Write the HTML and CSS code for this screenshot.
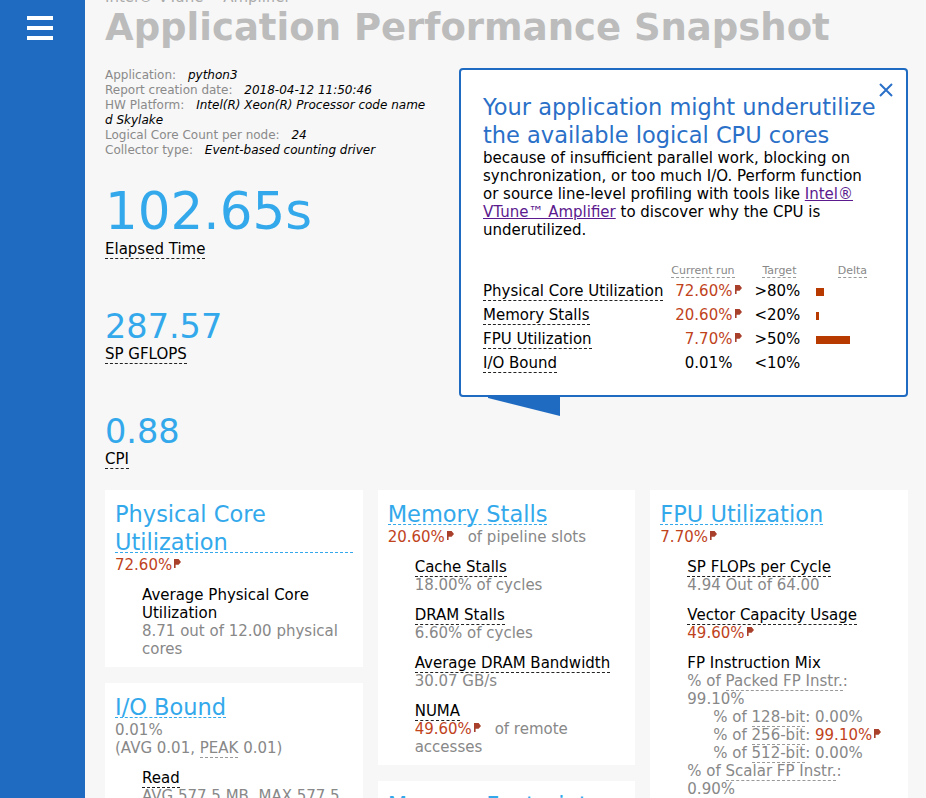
FILE: index.html
```html
<!DOCTYPE html>
<html lang="en">
<head>
<meta charset="utf-8">
<title>Application Performance Snapshot</title>
<link rel="stylesheet" href="styles.css">
</head>
<body>
<div class="app">
  <nav class="sidebar">
    <div class="burger"><span></span><span></span><span></span></div>
  </nav>
  <main class="main">
    <header class="head">
      <div class="product">Intel® VTune™ Amplifier</div>
      <h1 class="title">Application Performance Snapshot</h1>
    </header>

    <section class="meta">
      <div><span class="k">Application:</span> <span class="v">python3</span></div>
      <div><span class="k">Report creation date:</span> <span class="v">2018-04-12 11:50:46</span></div>
      <div><span class="k">HW Platform:</span> <span class="v">Intel(R) Xeon(R) Processor code named Skylake</span></div>
      <div><span class="k">Logical Core Count per node:</span> <span class="v">24</span></div>
      <div><span class="k">Collector type:</span> <span class="v">Event-based counting driver</span></div>
    </section>

    <section class="metrics">
      <div class="metric m1"><div class="num">102.65s</div><div class="lbl"><span class="dash">Elapsed Time</span></div></div>
      <div class="metric m2"><div class="num">287.57</div><div class="lbl"><span class="dash">SP GFLOPS</span></div></div>
      <div class="metric m2"><div class="num">0.88</div><div class="lbl"><span class="dash">CPI</span></div></div>
    </section>

    <section class="cards">
      <div class="col">
        <div class="card">
          <div class="card-title">Physical Core Utilization</div>
          <div class="val"><span class="bad">72.60%<svg class="flag" viewBox="0 0 7 9"><path d="M0 0h1.6v9H0z M1.6 0H4.6l2.4 2.9L4.6 5.8H1.6z"/></svg></span></div>
          <div class="item">
            <div class="item-name">Average Physical Core Utilization</div>
            <div class="gray">8.71 out of 12.00 physical cores</div>
          </div>
        </div>
        <div class="card">
          <div class="card-title">I/O Bound</div>
          <div class="gray">0.01%</div>
          <div class="gray">(AVG 0.01, <span class="dash-g">PEAK</span> 0.01)</div>
          <div class="item">
            <div><span class="dash">Read</span></div>
            <div class="gray">AVG 577.5 MB, MAX 577.5 MB</div>
          </div>
        </div>
      </div>
      <div class="col">
        <div class="card">
          <div class="card-title">Memory Stalls</div>
          <div class="val"><span class="bad">20.60%<svg class="flag" viewBox="0 0 7 9"><path d="M0 0h1.6v9H0z M1.6 0H4.6l2.4 2.9L4.6 5.8H1.6z"/></svg></span> <span class="gray note">of pipeline slots</span></div>
          <div class="item">
            <div><span class="dash">Cache Stalls</span></div>
            <div class="gray">18.00% of cycles</div>
          </div>
          <div class="item">
            <div><span class="dash">DRAM Stalls</span></div>
            <div class="gray">6.60% of cycles</div>
          </div>
          <div class="item">
            <div><span class="dash">Average DRAM Bandwidth</span></div>
            <div class="gray">30.07 GB/s</div>
          </div>
          <div class="item">
            <div><span class="dash">NUMA</span></div>
            <div><span class="bad">49.60%<svg class="flag" viewBox="0 0 7 9"><path d="M0 0h1.6v9H0z M1.6 0H4.6l2.4 2.9L4.6 5.8H1.6z"/></svg></span> <span class="gray note">of remote accesses</span></div>
          </div>
        </div>
        <div class="card">
          <div class="card-title">Memory Footprint</div>
        </div>
      </div>
      <div class="col">
        <div class="card">
          <div class="card-title">FPU Utilization</div>
          <div class="val"><span class="bad">7.70%<svg class="flag" viewBox="0 0 7 9"><path d="M0 0h1.6v9H0z M1.6 0H4.6l2.4 2.9L4.6 5.8H1.6z"/></svg></span></div>
          <div class="item">
            <div><span class="dash">SP FLOPs per Cycle</span></div>
            <div class="gray">4.94 Out of 64.00</div>
          </div>
          <div class="item">
            <div><span class="dash">Vector Capacity Usage</span></div>
            <div><span class="bad">49.60%<svg class="flag" viewBox="0 0 7 9"><path d="M0 0h1.6v9H0z M1.6 0H4.6l2.4 2.9L4.6 5.8H1.6z"/></svg></span></div>
          </div>
          <div class="item">
            <div>FP Instruction Mix</div>
            <div class="gray">% of <span class="dash-g">Packed FP Instr.</span>: 99.10%</div>
            <div class="gray sub">% of <span class="dash-g">128-bit</span>: 0.00%</div>
            <div class="gray sub">% of <span class="dash-g">256-bit</span>: <span class="bad">99.10%<svg class="flag" viewBox="0 0 7 9"><path d="M0 0h1.6v9H0z M1.6 0H4.6l2.4 2.9L4.6 5.8H1.6z"/></svg></span></div>
            <div class="gray sub">% of <span class="dash-g">512-bit</span>: 0.00%</div>
            <div class="gray">% of <span class="dash-g">Scalar FP Instr.</span>: 0.90%</div>
          </div>
        </div>
      </div>
    </section>

    <div class="popup">
      <button class="close" aria-label="Close"><svg viewBox="0 0 14 14"><path d="M1 1L13 13M13 1L1 13"/></svg></button>
      <h2 class="pop-title">Your application might underutilize the available logical CPU cores</h2>
      <p class="pop-text">because of insufficient parallel work, blocking on synchronization, or too much I/O. Perform function or source line-level profiling with tools like <a class="link" href="#">Intel® VTune™ Amplifier</a> to discover why the CPU is underutilized.</p>
      <div class="ptable">
        <div class="th"></div>
        <div class="th"><span class="dash-g">Current run</span></div>
        <div class="th"><span class="dash-g">Target</span></div>
        <div class="th"><span class="dash-g">Delta</span></div>

        <div class="td name"><span class="dash">Physical Core Utilization</span></div>
        <div class="td cur bad">72.60%<svg class="flag" viewBox="0 0 7 9"><path d="M0 0h1.6v9H0z M1.6 0H4.6l2.4 2.9L4.6 5.8H1.6z"/></svg></div>
        <div class="td tgt">&gt;80%</div>
        <div class="td delta"><span class="bar" style="width:8px"></span></div>

        <div class="td name"><span class="dash">Memory Stalls</span></div>
        <div class="td cur bad">20.60%<svg class="flag" viewBox="0 0 7 9"><path d="M0 0h1.6v9H0z M1.6 0H4.6l2.4 2.9L4.6 5.8H1.6z"/></svg></div>
        <div class="td tgt">&lt;20%</div>
        <div class="td delta"><span class="bar" style="width:3px"></span></div>

        <div class="td name"><span class="dash">FPU Utilization</span></div>
        <div class="td cur bad">7.70%<svg class="flag" viewBox="0 0 7 9"><path d="M0 0h1.6v9H0z M1.6 0H4.6l2.4 2.9L4.6 5.8H1.6z"/></svg></div>
        <div class="td tgt">&gt;50%</div>
        <div class="td delta"><span class="bar" style="width:34px"></span></div>

        <div class="td name"><span class="dash">I/O Bound</span></div>
        <div class="td cur">0.01%<span class="flag-space"></span></div>
        <div class="td tgt">&lt;10%</div>
        <div class="td delta"></div>
      </div>
      <svg class="tail" viewBox="0 0 72 21"><polygon points="0,0 72,0 72,21 0,3"/></svg>
    </div>
  </main>
</div>
</body>
</html>
```

FILE: styles.css
```css
html, body {
  margin: 0;
  padding: 0;
}

body {
  font-family: "DejaVu Sans", Verdana, sans-serif;
  font-size: 15px;
  line-height: 18px;
  color: #000;
  background: #f7f7f7;
  overflow: hidden;
}

.app {
  display: flex;
  height: 798px;
  overflow: hidden;
}

.sidebar {
  flex: none;
  width: 85px;
  background: #1f6bc1;
}

.burger {
  display: flex;
  flex-direction: column;
  gap: 6px;
  width: 26px;
  margin: 16px 0 0 27px;
}

.burger span {
  display: block;
  height: 4px;
  background: #fff;
}

.main {
  flex: 1;
  min-width: 0;
  position: relative;
  padding: 0 18px 0 20px;
}

.product {
  margin-top: -10px;
  font-size: 15px;
  line-height: 15px;
  color: #ababab;
}

.title {
  margin: 0;
  font-size: 37px;
  line-height: 45px;
  font-weight: bold;
  color: #bcbcbc;
  white-space: nowrap;
}

.meta {
  margin-top: 18px;
  width: 326px;
  font-size: 12px;
  line-height: 15px;
  word-break: break-all;
}

.k {
  color: #8a8a8a;
  margin-right: 8px;
}

.v {
  font-style: italic;
}

.metrics {
  margin-top: 28px;
}

.metric {
  margin-bottom: 51px;
}

.metric:last-child {
  margin-bottom: 22px;
}

.num {
  color: #33a9ec;
}

.m1 .num {
  font-size: 51.5px;
  line-height: 50px;
}

.m1 .lbl {
  margin-top: 4px;
}

.m2 .num {
  font-size: 33.5px;
  line-height: 36px;
}

.dash {
  border-bottom: 1px dashed #222;
}

.dash-g {
  border-bottom: 1px dashed #999;
}

.cards {
  display: grid;
  grid-template-columns: repeat(3, 1fr);
  column-gap: 15px;
  align-items: start;
}

.col {
  display: flex;
  flex-direction: column;
  gap: 16px;
}

.card {
  background: #fff;
  padding: 9.5px 10px 9px;
}

.card-title {
  width: fit-content;
  font-size: 22.5px;
  line-height: 28px;
  color: #33a9ec;
}

.card-title::after {
  content: "";
  display: block;
  margin: -4px 0 3.5px;
  border-top: 1px dashed #33a9ec;
}

.gray {
  color: #888;
}

.bad {
  color: #c0431c;
}

.note {
  margin-left: 9px;
}

.flag {
  width: 7px;
  height: 9px;
  margin-left: 2px;
  vertical-align: 2px;
  fill: #a8402c;
}

.item {
  margin: 12px 8px 0 27px;
}

.sub {
  padding-left: 26px;
}

/* popup */
.popup {
  position: absolute;
  left: 374px;
  top: 68px;
  box-sizing: border-box;
  width: 449px;
  height: 329px;
  padding: 22.5px 27px 0 22px;
  background: #fff;
  border: 2px solid #1f6bc1;
  border-radius: 4px;
}

.close {
  position: absolute;
  top: 13px;
  right: 13px;
  width: 14px;
  height: 14px;
  padding: 0;
  border: 0;
  background: none;
}

.close svg {
  display: block;
  width: 14px;
  height: 14px;
  stroke: #2a70c8;
  stroke-width: 2;
}

.pop-title {
  margin: 0;
  font-size: 22.5px;
  line-height: 28px;
  font-weight: normal;
  color: #2a70c8;
}

.pop-text {
  margin: 0;
}

.link {
  color: #5b1a8e;
  text-decoration: underline;
}

.ptable {
  margin-top: 23.5px;
  display: grid;
  grid-template-columns: auto 79px 74px 72px;
  justify-content: start;
}

.th {
  font-size: 11px;
  line-height: 17px;
  color: #888;
  text-align: center;
}

.td {
  line-height: 24px;
  white-space: nowrap;
}

.cur {
  text-align: right;
}

.cur .flag {
  margin-left: 3px;
}

.flag-space {
  display: inline-block;
  width: 10px;
}

.tgt {
  padding-left: 12px;
}

.bar {
  display: inline-block;
  height: 8px;
  background: #b83a00;
  vertical-align: middle;
}

.tail {
  position: absolute;
  left: 27px;
  top: 100%;
  width: 72px;
  height: 21px;
  fill: #1f6bc1;
}
```
